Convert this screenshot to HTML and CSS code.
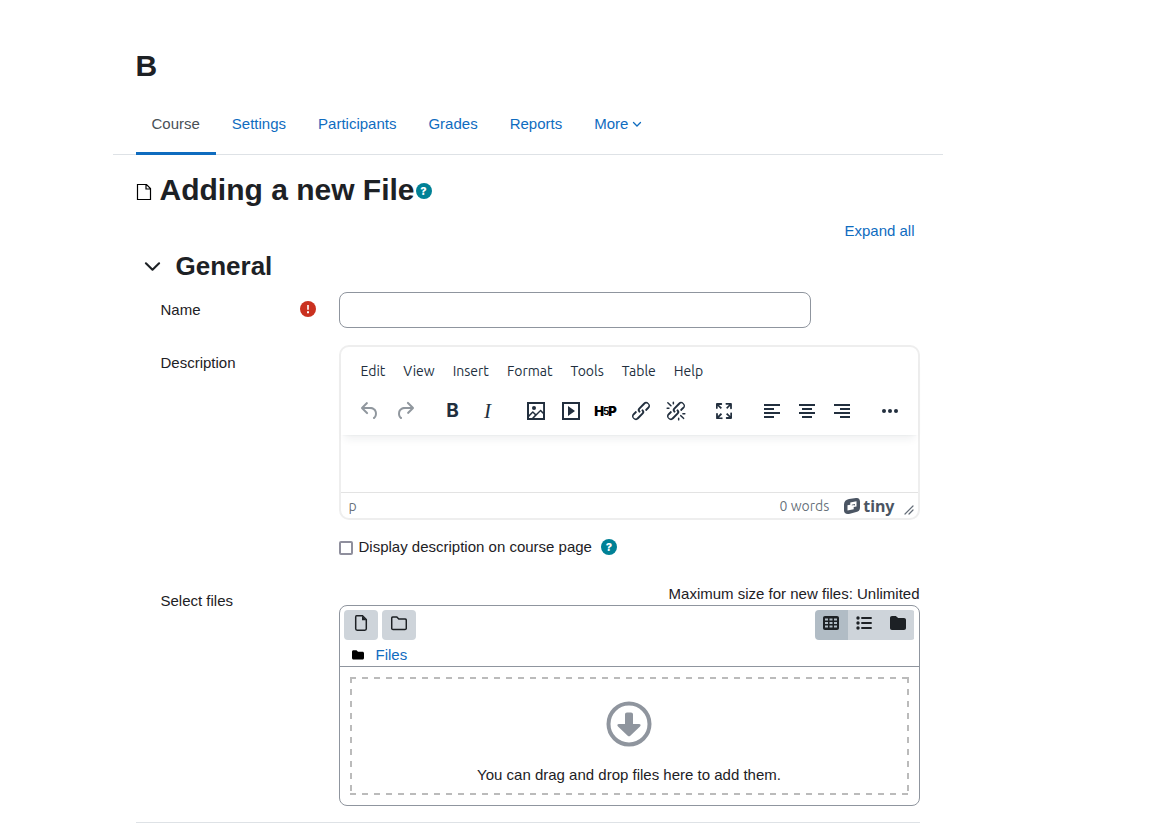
FILE: index.html
```html
<!DOCTYPE html>
<html lang="en">
<head>
<meta charset="utf-8">
<title>Adding a new File</title>
<link rel="stylesheet" href="styles.css">
</head>
<body>
<div class="page">
  <header class="page-header"><h1>B</h1></header>
  <nav class="tabs" aria-label="Course">
    <a href="#" class="tab tab-active">Course</a>
    <a href="#" class="tab">Settings</a>
    <a href="#" class="tab">Participants</a>
    <a href="#" class="tab">Grades</a>
    <a href="#" class="tab">Reports</a>
    <a href="#" class="tab">More <svg class="caret" viewBox="0 0 10 10"><path d="M1.500 3.500 5 7l3.500-3.500" fill="none" stroke="currentColor" stroke-width="1.300" stroke-linecap="round"/></svg></a>
  </nav>
  <main class="content">
    <div class="title">
      <svg class="title-icon" viewBox="0 0 16 18"><path d="M1.500 1.500h9l4 4v11h-13zM10 1.500v4.500h4.500" fill="none" stroke="#000" stroke-width="1.200"/></svg>
      <h2>Adding a new File</h2>
      <button type="button" class="help" aria-label="Help with File">?</button>
    </div>
    <div class="expand"><a href="#">Expand all</a></div>
    <form>
      <div class="section-head">
        <button type="button" class="toggle" aria-label="Collapse General"><svg viewBox="0 0 16 16"><path d="M1.800 5 8 11l6.200-6" fill="none" stroke="currentColor" stroke-width="2" stroke-linecap="round" stroke-linejoin="round"/></svg></button>
        <h3>General</h3>
      </div>
      <div class="row row-name">
        <div class="label-cell">
          <label for="name">Name</label>
          <svg class="required" viewBox="0 0 16 16" role="img" aria-label="Required"><circle cx="8" cy="8" r="8" fill="#ca3120"/><path d="M7.200 4h1.600v4.800H7.200zM7 10.300h2v1.900H7z" fill="#fff"/></svg>
        </div>
        <input id="name" class="text-input" type="text">
      </div>
      <div class="row row-desc">
        <div class="label-cell label-top"><label for="description">Description</label></div>
        <div class="field">
          <div class="editor">
            <div class="editor-head">
              <div class="menubar">
                <button type="button">Edit</button><button type="button">View</button><button type="button">Insert</button><button type="button">Format</button><button type="button">Tools</button><button type="button">Table</button><button type="button">Help</button>
              </div>
              <div class="toolbar">
                <div class="group">
                  <button type="button" disabled aria-label="Undo"><svg viewBox="0 0 24 24"><path d="M6.4 8H12c3.7 0 6.2 2 6.8 5.1.6 2.7-.4 5.6-2.3 6.8a1 1 0 0 1-1-1.800c1.100-.6 1.800-2.700 1.400-4.600-.5-2.100-2.100-3.500-4.900-3.500H6.400l3.300 3.300a1 1 0 1 1-1.400 1.400l-5-5a1 1 0 0 1 0-1.400l5-5a1 1 0 0 1 1.400 1.400L6.400 8Z"/></svg></button>
                  <button type="button" disabled aria-label="Redo"><svg viewBox="0 0 24 24"><path d="M17.600 10H12c-2.800 0-4.400 1.400-4.900 3.500-.4 2 .3 4 1.400 4.600a1 1 0 1 1-1 1.800c-2-1.200-2.900-4.100-2.300-6.800.6-3 3-5.100 6.800-5.100h5.600l-3.300-3.300a1 1 0 1 1 1.400-1.400l5 5a1 1 0 0 1 0 1.400l-5 5a1 1 0 0 1-1.400-1.400l3.300-3.300Z"/></svg></button>
                </div>
                <div class="group">
                  <button type="button" class="bold">B</button>
                  <button type="button" class="italic">I</button>
                </div>
                <div class="group">
                  <button type="button" aria-label="Image"><svg viewBox="0 0 24 24"><path fill-rule="evenodd" d="m5 15.700 3.300-3.200c.3-.3.7-.3 1 0L12 15l4.100-4c.3-.4.8-.4 1 0l2 1.900V5H5v10.700ZM5 18v1h3l2.800-2.900-2-2L5 17.900Zm14-3-2.500-2.400-6.400 6.500H19v-4ZM3 3h18v18H3z"/><circle cx="10" cy="9" r="2"/></svg></button>
                  <button type="button" aria-label="Multimedia"><svg viewBox="0 0 24 24"><path fill-rule="evenodd" d="M3 3h18v18H3zM5 5v14h14V5zM9 7l7 5-7 5z"/></svg></button>
                  <button type="button" class="hfp">H<small>5</small>P</button>
                  <button type="button" aria-label="Link"><svg viewBox="0 0 24 24"><path d="M6.200 12.300a1 1 0 0 1 1.400 1.400l-2 2a2 2 0 1 0 2.600 2.800l4.800-4.800a1 1 0 0 0 0-1.400 1 1 0 1 1 1.400-1.300 2.900 2.900 0 0 1 0 4L9.600 20a3.900 3.900 0 0 1-5.500-5.500l2-2Zm11.600-.6a1 1 0 0 1-1.400-1.400l2-2a2 2 0 1 0-2.600-2.800L11 10.300a1 1 0 0 0 0 1.400A1 1 0 1 1 9.600 13a2.900 2.900 0 0 1 0-4L14.400 4a3.900 3.900 0 0 1 5.500 5.500l-2 2Z"/></svg></button>
                  <button type="button" aria-label="Unlink"><svg viewBox="0 0 24 24"><path d="M6.200 12.300a1 1 0 0 1 1.400 1.400l-2 2a2 2 0 1 0 2.600 2.800l4.800-4.800a1 1 0 0 0 0-1.400 1 1 0 1 1 1.400-1.300 2.900 2.900 0 0 1 0 4L9.600 20a3.900 3.900 0 0 1-5.500-5.500l2-2Zm11.600-.6a1 1 0 0 1-1.400-1.400l2.100-2a2 2 0 1 0-2.700-2.800L11 10.300a1 1 0 0 0 0 1.400A1 1 0 1 1 9.600 13a2.900 2.900 0 0 1 0-4L14.400 4a3.900 3.900 0 0 1 5.500 5.500l-2 2ZM7.600 6.300a.8.8 0 0 1-1 1.100L3.300 4.200a.7.7 0 1 1 1-1l3.200 3.100ZM5.100 8.600a.8.8 0 0 1 0 1.500H3a.8.8 0 0 1 0-1.500H5Zm5-3.500a.8.8 0 0 1-1.500 0V3a.8.8 0 0 1 1.500 0V5Zm6 11.800a.8.8 0 0 1 1-1l3.200 3.200a.8.8 0 0 1-1 1L16 17Zm-2.200 2a.8.8 0 0 1 1.500 0V21a.8.8 0 0 1-1.500 0V19Zm5-3.500a.7.7 0 1 1 0-1.500H21a.8.8 0 0 1 0 1.500H19Z"/></svg></button>
                </div>
                <div class="group">
                  <button type="button" aria-label="Fullscreen"><svg viewBox="0 0 24 24"><path d="m15.300 10-1.200-1.300 2.900-3h-2.300a.9.9 0 1 1 0-1.700H19c.5 0 .9.4.9.9v4.400a.9.9 0 1 1-1.800 0V7l-2.900 3Zm0 4 3 3v-2.300a.9.9 0 1 1 1.700 0V19c0 .5-.4.9-.9.9h-4.400a.9.9 0 1 1 0-1.800H17l-3-2.900 1.300-1.200ZM10 15.400l-2.900 3h2.300a.9.9 0 1 1 0 1.700H5a.9.9 0 0 1-.9-.9v-4.400a.9.9 0 1 1 1.800 0V17l2.900-3 1.200 1.300ZM8.700 10 5.700 7v2.300a.9.9 0 0 1-1.700 0V5c0-.5.4-.9.9-.9h4.400a.9.9 0 0 1 0 1.800H7l3 2.900-1.300 1.200Z"/></svg></button>
                </div>
                <div class="group">
                  <button type="button" aria-label="Align left"><svg viewBox="0 0 24 24"><path d="M4 5h16v2H4zM4 9h10v2H4zM4 13h16v2H4zM4 17h10v2H4z"/></svg></button>
                  <button type="button" aria-label="Align center"><svg viewBox="0 0 24 24"><path d="M4 5h16v2H4zM7 9h10v2H7zM4 13h16v2H4zM7 17h10v2H7z"/></svg></button>
                  <button type="button" aria-label="Align right"><svg viewBox="0 0 24 24"><path d="M4 5h16v2H4zM10 9h10v2H10zM4 13h16v2H4zM10 17h10v2H10z"/></svg></button>
                </div>
                <div class="group">
                  <button type="button" aria-label="More"><svg viewBox="0 0 24 24"><circle cx="6" cy="12" r="2"/><circle cx="12" cy="12" r="2"/><circle cx="18" cy="12" r="2"/></svg></button>
                </div>
              </div>
            </div>
            <textarea id="description" class="editor-body"></textarea>
            <div class="statusbar">
              <span class="path">p</span>
              <button type="button" class="words">0 words</button>
              <a href="#" class="brand"><svg viewBox="0 0 16 16"><path fill-rule="evenodd" d="M5 1 12 0c2.500-.2 4 1.200 4 3.500v6c0 2.500-1.200 4-3.800 4.600L5 15.900C2 16.400 0 15 0 12.500V6.500C0 3.500 2 1.600 5 1ZM6.300 4.500v2.200L3.500 7.300v5.200l6.200-1.200V9.100l2.800-.6V3.300zM7.800 6.700 11 6.100v1.200l-1.300.3v-.5l-1.900.4z"/></svg><span>tiny</span></a>
              <svg class="resize" viewBox="0 0 10 10"><path d="M1 9 9 1M5 9l4-4" stroke="currentColor" stroke-width="1.200" stroke-linecap="round"/></svg>
            </div>
          </div>
          <div class="check">
            <input id="show" type="checkbox">
            <label for="show">Display description on course page</label>
            <button type="button" class="help" aria-label="Help with description">?</button>
          </div>
        </div>
      </div>
      <div class="row row-files">
        <div class="label-cell label-files"><span>Select files</span></div>
        <div class="field">
          <div class="limit">Maximum size for new files: Unlimited</div>
          <div class="manager">
            <div class="manager-tools">
              <button type="button" class="tool" aria-label="Add file"><svg viewBox="0 0 16 16"><path d="M3.500.8h6l3.800 3.800v9.200c0 .8-.6 1.400-1.400 1.400H4.100c-.8 0-1.400-.6-1.400-1.400V2.200C2.700 1.400 3 .8 3.500.8Z" fill="none" stroke="currentColor" stroke-width="1.500"/><path d="M9 1v4.300h4.300z"/></svg></button>
              <button type="button" class="tool" aria-label="Create folder"><svg viewBox="0 0 16 16"><path d="M2 2h3.800l2 2H14c.8 0 1.300.5 1.300 1.300v7.900c0 .8-.5 1.300-1.300 1.300H2c-.8 0-1.300-.5-1.300-1.300V3.300C.7 2.500 1.200 2 2 2Z" fill="none" stroke="currentColor" stroke-width="1.500"/></svg></button>
              <div class="views">
                <button type="button" class="view-on" aria-label="Icon view"><svg viewBox="0 0 16 16"><path fill-rule="evenodd" d="M2 1h12c1.200 0 2 .8 2 2v10c0 1.200-.8 2-2 2H2c-1.200 0-2-.8-2-2V3c0-1.200.8-2 2-2ZM2 3.500v2h3v-2zM6.500 3.500v2h3v-2zM11 3.500v2h3v-2zM2 7v2h3V7zM6.500 7v2h3V7zM11 7v2h3V7zM2 10.500v2h3v-2zM6.500 10.500v2h3v-2zM11 10.500v2h3v-2z"/></svg></button>
                <button type="button" aria-label="List view"><svg viewBox="0 0 16 16"><circle cx="2" cy="3" r="1.700"/><circle cx="2" cy="8" r="1.700"/><circle cx="2" cy="13" r="1.700"/><path d="M6 3h9M6 8h9M6 13h9" stroke="currentColor" stroke-width="1.900" stroke-linecap="round"/></svg></button>
                <button type="button" aria-label="Tree view"><svg viewBox="0 0 16 16"><path d="M2 1h3.800l2.400 2H14c1.200 0 2 .8 2 2v8c0 1.200-.8 2-2 2H2c-1.200 0-2-.8-2-2V3c0-1.200.8-2 2-2Z"/></svg></button>
              </div>
            </div>
            <div class="crumbs"><svg viewBox="0 0 16 16"><path d="M2 1.500h4l2 2h6c1.200 0 2 .8 2 2v6.500c0 1.200-.8 2-2 2H2c-1.200 0-2-.8-2-2V3.500c0-1.200.8-2 2-2Z"/></svg><a href="#">Files</a></div>
            <div class="drop-wrap">
              <div class="drop">
                <svg viewBox="0 0 46 46"><circle cx="23" cy="23" r="20.500" fill="none" stroke="currentColor" stroke-width="4"/><path d="M21 11.500h4c1.200 0 2 .8 2 2V23h6c1.600 0 2.200 1.300 1 2.400l-9.700 9.300c-.8.800-1.800.8-2.600 0L12 25.400c-1.200-1.100-.6-2.400 1-2.400h6v-9.500c0-1.200.8-2 2-2Z"/></svg>
                <p>You can drag and drop files here to add them.</p>
              </div>
            </div>
          </div>
        </div>
      </div>
    </form>
  </main>
</div>
</body>
</html>
```
FILE: styles.css
```css
* { box-sizing: border-box; }
body {
  margin: 0;
  padding: 48px 107px 15px 0;
  background: #fff;
  color: #1d2125;
  font: 15px/22px "Liberation Sans", Arial, sans-serif;
}
h1, h2, h3, p { margin: 0; }
a { color: #0f6cbf; text-decoration: none; }
button { margin: 0; padding: 0; border: 0; background: none; color: inherit; font: inherit; cursor: pointer; }
svg { display: block; fill: currentColor; flex: none; }

.page { max-width: 830px; margin: 0 auto; }
.page-header { padding: 0 23px; }
h1, h2 { font-size: 30px; line-height: 36px; }
.tabs { display: flex; margin-top: 10px; padding: 0 23px; height: 61px; border-bottom: 1px solid #dee2e6; }
.tab { display: flex; align-items: center; gap: 4px; height: 61px; padding: 1px 16px 0; border-bottom: 3px solid transparent; }
.tab-active { color: #495057; border-bottom-color: #0f6cbf; }
.caret { width: 10px; height: 10px; }

.content { padding: 17px 23px 0; }
.title { display: flex; align-items: center; }
.title-icon { width: 16px; height: 18px; margin: 4px 8px 0 0; }
.help {
  width: 16px; height: 16px; border-radius: 50%;
  background: #008196; color: #fff;
  font: 800 11px/16px Inter, sans-serif; text-align: center;
}
.title .help { margin: 2px 0 0 1px; }
.expand { display: flex; justify-content: flex-end; margin-top: 12px; padding-right: 5px; }
.section-head { display: flex; align-items: center; gap: 15px; margin: 8px 0 0 8px; }
.toggle svg { width: 17px; height: 17px; }
h3 { font-size: 26px; line-height: 32px; }

form { border-bottom: 1px solid #dee2e6; padding-bottom: 16px; }
.row { display: grid; grid-template-columns: 178px minmax(0, 1fr); padding-left: 25px; }
.row-name { align-items: center; margin-top: 10px; }
.label-cell { display: flex; align-items: center; justify-content: space-between; padding-right: 23px; }
.label-top { align-items: flex-start; padding-top: 7px; }
.label-files { align-items: flex-start; padding-top: 7px; }
.required { width: 16px; height: 16px; margin-bottom: 2px; }
.text-input { width: 472px; max-width: 100%; height: 36px; padding: 6px 12px; border: 1px solid #8f959e; border-radius: 8px; font: inherit; }
.row-desc { margin-top: 17px; }

.editor { display: flex; flex-direction: column; border: 2px solid #eee; border-radius: 10px; color: #222f3e; font: 14px/24px Ubuntu, "Noto Sans", sans-serif; }
.editor-head { padding: 4px 11px 5px 12px; border-radius: 10px 10px 0 0; box-shadow: 0 2px 2px -2px rgba(34, 47, 62, .1), 0 8px 8px -4px rgba(34, 47, 62, .07); }
.menubar { display: flex; height: 40px; align-items: center; gap: 2px; }
.menubar button { padding: 0 8px; }
.toolbar { display: flex; gap: 14px; height: 39px; align-items: center; padding-top: 1px; }
.group { display: flex; gap: 1px; }
.group button { display: flex; align-items: center; justify-content: center; width: 34px; height: 28px; }
.group button:disabled { color: rgba(34, 47, 62, .5); }
.group svg { width: 24px; height: 24px; }
.group .bold { font: bold 19px/28px Inter, sans-serif; }
.group .italic { font: italic 21px/28px "Liberation Serif", serif; }
.group .hfp { color: #000; font: 900 13px/28px Inter, sans-serif; }
.hfp small { margin: 0 -1px; font-size: 10px; font-weight: 700; }
.editor-body { display: block; width: 100%; height: 57px; border: 0; resize: none; background: transparent; }
.statusbar { display: flex; align-items: center; height: 26px; padding: 0 4px 0 8px; border-top: 1px solid #e3e3e3; color: rgba(34, 47, 62, .7); }
.path { flex: 1; }
.brand { display: flex; align-items: center; gap: 3px; margin-left: 15px; color: #4b5563; font: bold 16px/22px "Noto Sans", sans-serif; }
.brand svg { width: 16px; height: 16px; }
.resize { width: 10px; height: 10px; margin: 8px 0 0 9px; }

.check { display: flex; align-items: center; margin-top: 16px; }
.check input { appearance: none; width: 14px; height: 14px; margin: 2px 6px 0 0; border: 2px solid #8f8f9d; border-radius: 2px; }
.check .help { margin-left: 9px; }

.row-files { margin-top: 25px; }
.limit { text-align: right; }
.manager { border: 1px solid #8f959e; border-radius: 8px; }
.manager-tools { display: flex; gap: 4px; padding: 4px; }
.tool, .views button { display: flex; align-items: center; justify-content: center; height: 30px; padding-bottom: 4px; background: #ced4da; }
.tool { width: 34px; border-radius: 4px; }
.tool svg, .views svg { width: 16px; height: 16px; }
.views { display: flex; margin-left: auto; width: 100px; overflow: hidden; border-radius: 4px; }
.views button { flex: 1; }
.views .view-on { background: #b1bcc5; }
.crumbs { display: flex; align-items: center; gap: 12px; height: 23px; padding-left: 12px; border-bottom: 1px solid #8f959e; }
.crumbs svg { width: 12px; height: 12px; color: #000; }
.drop-wrap { padding: 10px; }
.drop {
  display: flex; flex-direction: column; align-items: center; gap: 17px; height: 118px; padding-top: 24px;
  background-image:
    linear-gradient(90deg, #bbb 50%, transparent 50%),
    linear-gradient(90deg, #bbb 50%, transparent 50%),
    linear-gradient(#bbb 50%, transparent 50%),
    linear-gradient(#bbb 50%, transparent 50%);
  background-size: 12px 2px, 12px 2px, 2px 12px, 2px 12px;
  background-position: 0 0, 0 100%, 0 0, 100% 0;
  background-repeat: repeat-x, repeat-x, repeat-y, repeat-y;
}
.drop svg { width: 46px; height: 46px; color: #8f959e; }
```
